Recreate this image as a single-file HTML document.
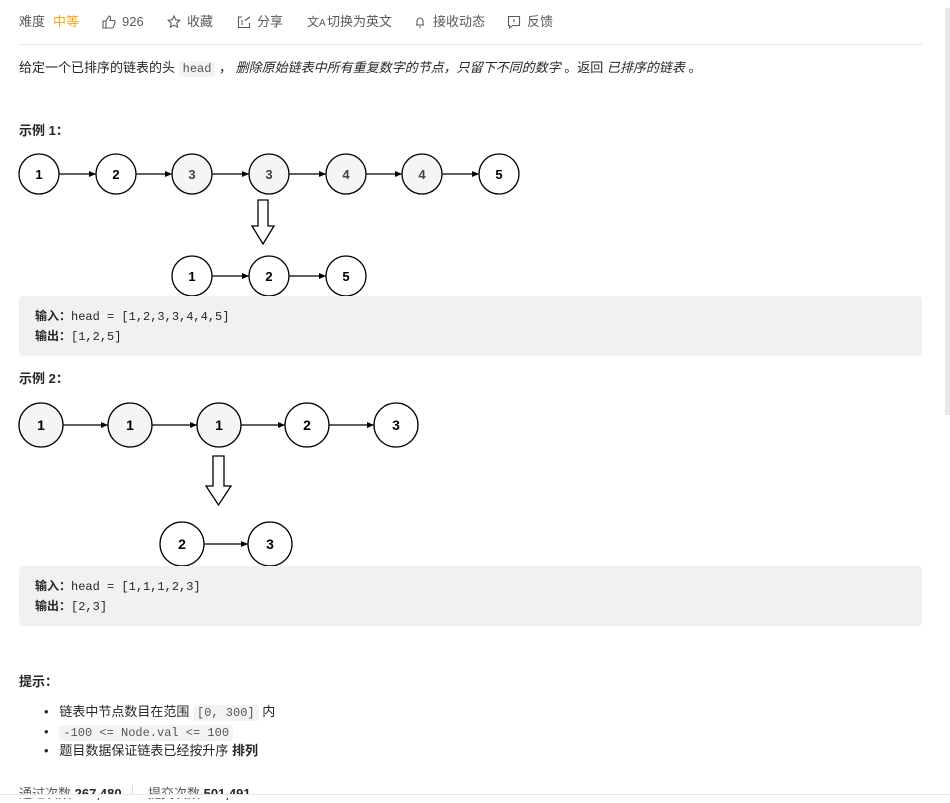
<!DOCTYPE html>
<html><head><meta charset="utf-8"><style>
body{margin:0;width:950px;height:797px;overflow:hidden;background:#fff;font-family:"Liberation Sans","Noto Sans CJK SC",sans-serif;font-size:13px;line-height:18px;color:#262626;position:relative}
.a{position:absolute;white-space:nowrap}
.g{color:#595959}
code{font-family:"Liberation Mono","Noto Sans CJK SC",monospace;background:#f2f3f4;border-radius:3px;padding:1px 4px;font-size:12px;color:#555}
.pre{position:absolute;left:19px;width:903px;height:60px;background:#f0f1f3;border-radius:4px;font-size:12px;font-family:"Liberation Mono",monospace}
.pre div{position:absolute;left:16px;line-height:18px}
.pre b{font-family:"Liberation Sans","Noto Sans CJK SC",sans-serif}
</style></head><body>
<div class="a g" style="left:19px;top:13px">难度</div>
<div class="a" style="left:53px;top:13px;color:#ffa116">中等</div>
<svg class="a" style="left:102px;top:15px" width="14" height="14" viewBox="0 0 14 14" fill="none" stroke="#595959" stroke-width="1.1"><path d="M1 6h3v7H1zM4 6l3-5c1 0 2 1 1.5 2.5L8 5.5h4c.8 0 1.3.7 1 1.5l-1.5 5c-.2.6-.7 1-1.3 1H4"/></svg>
<div class="a g" style="left:122px;top:13px">926</div>
<svg class="a" style="left:167px;top:15px" width="14" height="14" viewBox="0 0 14 14" fill="none" stroke="#595959" stroke-width="1.1"><path d="M7 1l1.8 3.8 4 .5-3 2.8.8 4L7 10.2 3.4 12.1l.8-4-3-2.8 4-.5z"/></svg>
<div class="a g" style="left:187px;top:13px">收藏</div>
<svg class="a" style="left:237px;top:15px" width="14" height="14" viewBox="0 0 14 14" fill="none" stroke="#595959" stroke-width="1.1"><path d="M5 2H1.5v10.5h11V8M5 5v5M8 5.5 13 2"/></svg>
<div class="a g" style="left:257px;top:13px">分享</div>
<div class="a g" style="left:307px;top:13px;font-size:12px">文<span style="font-size:10px">A</span></div>
<div class="a g" style="left:327px;top:13px">切换为英文</div>
<svg class="a" style="left:413px;top:15px" width="14" height="14" viewBox="0 0 14 14" fill="none" stroke="#595959" stroke-width="1.1"><path d="M4 10V6a3 3 0 0 1 6 0v4M3 10h8M6 12h2"/></svg>
<div class="a g" style="left:433px;top:13px">接收动态</div>
<svg class="a" style="left:507px;top:15px" width="14" height="14" viewBox="0 0 14 14" fill="none" stroke="#595959" stroke-width="1.1"><path d="M1.5 1.5h11v9h-7l-3 2.5v-2.5h-1zM7 4v3M7 8.5v.5"/></svg>
<div class="a g" style="left:527px;top:13px">反馈</div>
<div class="a" style="left:19px;top:44px;width:903px;height:1px;background:#e5e5e5"></div>
<div class="a" style="left:19px;top:59px">给定一个已排序的链表的头 <code>head</code> ， <i>删除原始链表中所有重复数字的节点，只留下不同的数字</i> 。返回 <i>已排序的链表</i> 。</div>
<div class="a" style="left:19px;top:122px;font-weight:bold">示例 1：</div>
<svg class="a" style="left:0;top:140px" width="540" height="160" font-family="Liberation Sans" font-weight="bold" font-size="13" text-anchor="middle">
<defs><marker id="m" markerWidth="8" markerHeight="8" refX="7" refY="4" orient="auto" markerUnits="userSpaceOnUse"><path d="M0 1L7 4 0 7z" fill="#000"/></marker></defs>
<g stroke="#000" stroke-width="1.3">
<circle cx="39" cy="34" r="20" fill="#fff"/><circle cx="116" cy="34" r="20" fill="#fff"/><circle cx="192" cy="34" r="20" fill="#f5f5f5"/><circle cx="269" cy="34" r="20" fill="#f5f5f5"/><circle cx="346" cy="34" r="20" fill="#f5f5f5"/><circle cx="422" cy="34" r="20" fill="#f5f5f5"/><circle cx="499" cy="34" r="20" fill="#fff"/>
<circle cx="192" cy="136" r="20" fill="#fff"/><circle cx="269" cy="136" r="20" fill="#fff"/><circle cx="346" cy="136" r="20" fill="#fff"/>
<path d="M258 60h10v26h6l-11 18-11-18h6z" fill="#fff"/>
</g>
<g stroke="#000" stroke-width="1.3" fill="none" marker-end="url(#m)">
<path d="M59 34H96"/><path d="M136 34H172"/><path d="M212 34H249"/><path d="M289 34H326"/><path d="M366 34H402"/><path d="M442 34H479"/><path d="M212 136H249"/><path d="M289 136H326"/>
</g>
<g fill="#000"><text x="39" y="39">1</text><text x="116" y="39">2</text><text x="192" y="39" fill="#444">3</text><text x="269" y="39" fill="#444">3</text><text x="346" y="39" fill="#444">4</text><text x="422" y="39" fill="#444">4</text><text x="499" y="39">5</text><text x="192" y="141">1</text><text x="269" y="141">2</text><text x="346" y="141">5</text></g>
</svg>
<div class="pre" style="top:296px"><div style="top:11px"><b>输入：</b>head = [1,2,3,3,4,4,5]</div><div style="top:31px"><b>输出：</b>[1,2,5]</div></div>
<div class="a" style="left:19px;top:370px;font-weight:bold">示例 2：</div>
<svg class="a" style="left:0;top:395px" width="440" height="172" font-family="Liberation Sans" font-weight="bold" font-size="14" text-anchor="middle">
<g stroke="#000" stroke-width="1.3">
<circle cx="41" cy="30" r="22" fill="#f5f5f5"/><circle cx="130" cy="30" r="22" fill="#f5f5f5"/><circle cx="219" cy="30" r="22" fill="#f5f5f5"/><circle cx="307" cy="30" r="22" fill="#fff"/><circle cx="396" cy="30" r="22" fill="#fff"/>
<circle cx="182" cy="149" r="22" fill="#fff"/><circle cx="270" cy="149" r="22" fill="#fff"/>
<path d="M213 61h11v30h7l-12.5 19-12.5-19h7z" fill="#fff"/>
</g>
<g stroke="#000" stroke-width="1.3" fill="none" marker-end="url(#m)">
<path d="M63 30H108"/><path d="M152 30H197"/><path d="M241 30H285"/><path d="M329 30H374"/><path d="M204 149H248"/>
</g>
<g fill="#000"><text x="41" y="35">1</text><text x="130" y="35">1</text><text x="219" y="35">1</text><text x="307" y="35">2</text><text x="396" y="35">3</text><text x="182" y="154">2</text><text x="270" y="154">3</text></g>
</svg>
<div class="pre" style="top:566px"><div style="top:11px"><b>输入：</b>head = [1,1,1,2,3]</div><div style="top:31px"><b>输出：</b>[2,3]</div></div>
<div class="a" style="left:19px;top:673px;font-weight:bold">提示：</div>
<div class="a" style="left:44px;top:703px">•&nbsp;&nbsp;&nbsp;链表中节点数目在范围 <code>[0, 300]</code> 内</div>
<div class="a" style="left:44px;top:723px">•&nbsp;&nbsp;&nbsp;<code>-100 &lt;= Node.val &lt;= 100</code></div>
<div class="a" style="left:44px;top:742px">•&nbsp;&nbsp;&nbsp;题目数据保证链表已经按升序 <b>排列</b></div>
<div class="a g" style="left:19px;top:785px">通过次数 <b style="color:#262626">267,480</b></div>
<div class="a" style="left:132px;top:786px;width:1px;height:12px;background:#ddd"></div>
<div class="a g" style="left:148px;top:785px">提交次数 <b style="color:#262626">501,491</b></div>
<div class="a" style="left:0;top:794px;width:950px;height:3px;background:#fff;border-top:1px solid #e8e8e8"></div>
<div class="a" style="left:945px;top:8px;width:5px;height:407px;background:#e8e8e8"></div>
</body></html>
